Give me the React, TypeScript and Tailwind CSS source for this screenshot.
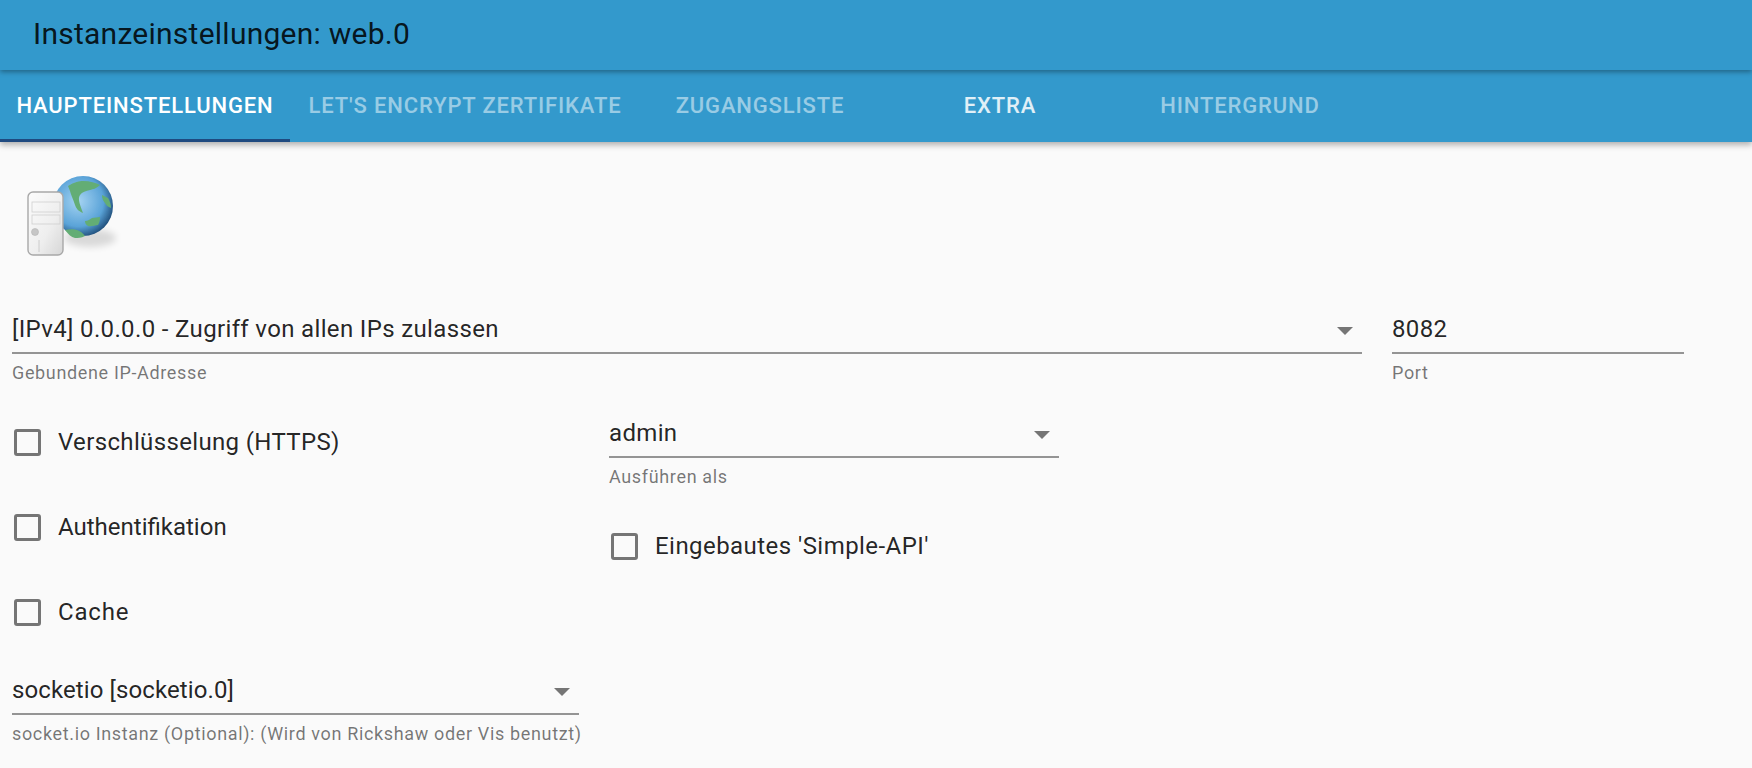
const tabs = [
  { label: 'HAUPTEINSTELLUNGEN', width: 'w-[290px]', color: 'text-white', active: true },
  { label: "LET'S ENCRYPT ZERTIFIKATE", width: 'w-[350px]', color: 'text-white/50' },
  { label: 'ZUGANGSLISTE', width: 'w-[240px]', color: 'text-white/50' },
  { label: 'EXTRA', width: 'w-[240px]', color: 'text-white/85' },
  { label: 'HINTERGRUND', width: 'w-[240px]', color: 'text-white/50' },
]

function WebIcon() {
  return (
    <svg width="100" height="96" viewBox="0 0 100 96" className="ml-[12px] block overflow-visible">
      <defs>
        <radialGradient id="globe" cx="0.42" cy="0.42" r="0.62">
          <stop offset="0" stopColor="#a6d4f2" />
          <stop offset="0.68" stopColor="#5aa3d8" />
          <stop offset="1" stopColor="#1e4c78" />
        </radialGradient>
        <linearGradient id="tower" x1="0" y1="0" x2="1" y2="1">
          <stop offset="0" stopColor="#fcfcfc" />
          <stop offset="0.6" stopColor="#eeeeee" />
          <stop offset="1" stopColor="#d6d6d6" />
        </linearGradient>
        <filter id="soft" x="-30%" y="-30%" width="160%" height="160%">
          <feGaussianBlur stdDeviation="3.5" />
        </filter>
        <filter id="smooth">
          <feGaussianBlur stdDeviation="0.5" />
        </filter>
      </defs>
      <ellipse cx="66" cy="63" rx="26" ry="9" fill="#000" opacity="0.13" filter="url(#soft)" />
      <g filter="url(#smooth)">
        <circle cx="59" cy="31" r="30" fill="url(#globe)" />
        <path d="M44 11 C50 7 56 6 59 6 C66 6 72 8 76 10 C72 14 69 14 66 15 C62 16 58 17 56 20 C53 24 57 32 59 38 C54 36 52 33 51 30 C49 24 47 20 46 16 Z" fill="#64ad74" />
        <path d="M78 20 L84 23 C86 26 87 30 87 33 C84 32 82 30 81 28 C79 26 78 23 78 20 Z" fill="#64ad74" />
        <path d="M61 46 C64 46 66 44 68 43 L76 42 C76 46 75 48 74 50 C71 50 67 52 64 51 C62 50 61 48 61 46 Z" fill="#64ad74" />
        <path d="M41 55 C45 54 50 54 53 55 C56 56 59 58 61 61 C57 63 54 63 51 63 C47 62 44 59 41 55 Z" fill="#64ad74" />
        <rect x="4" y="17" width="35" height="63" rx="5" fill="url(#tower)" stroke="#a8a8a8" strokeWidth="1.4" />
        <rect x="8" y="27" width="28" height="10" fill="none" stroke="#cfcfcf" strokeWidth="0.8" />
        <rect x="8" y="40" width="28" height="9" fill="none" stroke="#cfcfcf" strokeWidth="0.8" />
        <circle cx="11" cy="57" r="3.5" fill="#c6c6c6" stroke="#b4b4b4" strokeWidth="0.6" />
        <path d="M15 65V77" stroke="#c4c4c4" strokeWidth="0.8" />
      </g>
    </svg>
  )
}

function Field({ value, label, select, tracking = 'tracking-[0.35px]', className }: { value: string; label: string; select?: boolean; tracking?: string; className: string }) {
  return (
    <div className={className}>
      <div className={`flex h-[37px] items-center justify-between border-b-2 border-[#949494] pb-[11px] text-[24px] text-[#000000de] ${tracking}`}>
        <span className="whitespace-nowrap">{value}</span>
        {select && (
          <svg width="16" height="8" viewBox="0 0 16 8" className="mr-[9px] mt-[3px] shrink-0">
            <path d="M0 0H16L8 8Z" fill="#757575" />
          </svg>
        )}
      </div>
      <div className="mt-[9px] whitespace-nowrap text-[18px] leading-[20px] tracking-[0.65px] text-[#0000008a]">{label}</div>
    </div>
  )
}

function Check({ label, tracking = 'tracking-[0.35px]', className }: { label: string; tracking?: string; className: string }) {
  return (
    <div className={`flex items-center ${className}`}>
      <span className="h-[27px] w-[27px] shrink-0 rounded-[3px] border-[3px] border-[#757575]" />
      <span className={`ml-[17px] whitespace-nowrap text-[24px] text-[#000000de] ${tracking}`}>{label}</span>
    </div>
  )
}

export default function App() {
  return (
    <div className="h-[768px] w-[1752px] overflow-hidden bg-[#fafafa] font-['Roboto',sans-serif]">
      <header className="relative z-10 flex h-[70px] items-center bg-[#3399cc] pb-[3px] pl-[33px] shadow-[0_2px_5px_rgba(0,0,0,0.35)]">
        <h1 className="text-[30px] font-normal tracking-[0.25px] text-[#000000de]">Instanzeinstellungen: web.0</h1>
      </header>
      <nav className="relative flex h-[72px] bg-[#3399cc] shadow-[0_3px_6px_rgba(0,0,0,0.3)]">
        {tabs.map((tab) => (
          <div
            key={tab.label}
            className={`flex items-center justify-center whitespace-nowrap border-b-[3px] pt-[2px] text-[22px] font-medium tracking-[0.85px] ${tab.width} ${tab.color} ${tab.active ? 'border-[#1f4a80]' : 'border-transparent'}`}
          >
            {tab.label}
          </div>
        ))}
      </nav>

      <div className="pl-[12px] pt-[33px]">
        <WebIcon />
        <div className="mt-[46px] flex">
          <Field value="[IPv4] 0.0.0.0 - Zugriff von allen IPs zulassen" label="Gebundene IP-Adresse" select className="w-[1350px]" />
          <Field value="8082" label="Port" className="ml-[30px] w-[292px]" />
        </div>
        <div className="flex">
          <div className="w-[567px]">
            <Check label="Verschlüsselung (HTTPS)" className="mt-[39px] h-[40px] pl-[2px]" />
            <Check label="Authentifikation" tracking="tracking-[0px]" className="mt-[45px] h-[40px] pl-[2px]" />
            <Check label="Cache" tracking="tracking-[0.8px]" className="mt-[45px] h-[40px] pl-[2px]" />
            <Field value="socketio [socketio.0]" label="socket.io Instanz (Optional): (Wird von Rickshaw oder Vis benutzt)" select tracking="tracking-[0.1px]" className="mt-[46px] w-[567px]" />
          </div>
          <div className="ml-[30px] w-[450px] pt-[38px]">
            <Field value="admin" label="Ausführen als" select className="w-[450px]" />
            <Check label="Eingebautes 'Simple-API'" tracking="tracking-[0.45px]" className="mt-[39px] h-[40px] pl-[2px]" />
          </div>
        </div>
      </div>
    </div>
  )
}
